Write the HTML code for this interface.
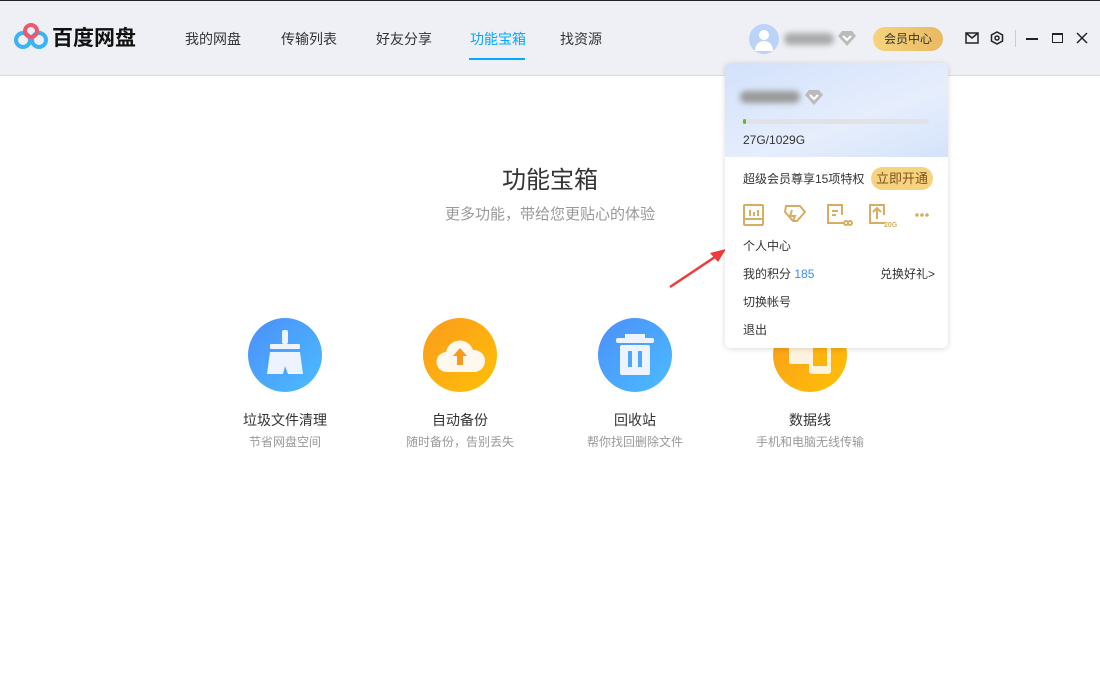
<!DOCTYPE html>
<html><head><meta charset="utf-8"><style>
*{margin:0;padding:0;box-sizing:border-box}
body{width:1100px;height:681px;position:relative;background:#fff;font-family:"Liberation Sans","Noto Sans CJK SC",sans-serif;overflow:hidden;color:#333}
.hdr{position:absolute;left:0;top:0;width:1100px;height:76px;background:#eef0f6;border-top:1px solid #222;border-bottom:1px solid #dcdde3}
.a{position:absolute;white-space:nowrap}
.nav{top:28px;font-size:14px;color:#333}
.ic{position:absolute;width:74px;height:74px;border-radius:50%}
.blue{background:linear-gradient(135deg,#4b8ff9,#4bbcff)}
.org{background:linear-gradient(135deg,#fb9a1e,#ffc105)}
.t1{font-size:14px;color:#333;text-align:center;width:160px}
.t2{font-size:12px;color:#999;text-align:center;width:160px}
.pop{position:absolute;left:725px;top:63px;width:223px;height:285px;background:#fff;border-radius:5px;box-shadow:0 1px 6px rgba(0,0,0,.15);overflow:hidden}
.ph{position:absolute;left:0;top:0;width:223px;height:94px;background:linear-gradient(160deg,#d2e1fb,#e6eefc 60%,#d4e3fb)}
.pi{font-size:12px;color:#333;line-height:12px}
</style></head><body>
<div class="hdr">
<svg class="a" style="left:14px;top:21px" width="34" height="28" viewBox="0 0 34 28"><circle cx="9" cy="18" r="7" fill="none" stroke="#3cb3f5" stroke-width="4"/><circle cx="25" cy="18" r="7" fill="none" stroke="#3cb3f5" stroke-width="4"/><circle cx="17" cy="9" r="6" fill="none" stroke="#f0576a" stroke-width="4"/></svg>
<div class="a" style="left:52px;top:21px;font-size:21px;font-weight:bold;color:#111">百度网盘</div>
<div class="a nav" style="left:185px">我的网盘</div>
<div class="a nav" style="left:281px">传输列表</div>
<div class="a nav" style="left:376px">好友分享</div>
<div class="a nav" style="left:470px;color:#06a7ff">功能宝箱</div>
<div class="a" style="left:469px;top:57px;width:56px;height:2px;background:#06a7ff"></div>
<div class="a nav" style="left:560px">找资源</div>
<div class="a" style="left:749px;top:23px;width:30px;height:30px;border-radius:50%;background:#bcd3f8"><div style="position:absolute;left:10px;top:6px;width:10px;height:10px;border-radius:50%;background:#fff"></div><div style="position:absolute;left:6px;top:17px;width:18px;height:10px;border-radius:9px 9px 0 0;background:#fff"></div></div>
<div class="a" style="left:784px;top:32px;width:50px;height:12px;background:#aaa;filter:blur(3px);border-radius:6px"></div>
<svg class="a" style="left:838px;top:29px" width="18" height="16" viewBox="0 0 18 16"><path d="M4 1h10l4 5-9 10-9-10z" fill="#bbb"/><path d="M5 6l4 4 4-4" stroke="#fff" stroke-width="2" fill="none"/></svg>
<div class="a" style="left:873px;top:26px;width:70px;height:24px;border-radius:12px;background:linear-gradient(90deg,#f6d47c,#e9b962);font-size:12px;line-height:24px;text-align:center;color:#333">会员中心</div>
<svg class="a" style="left:965px;top:31px" width="14" height="12" viewBox="0 0 14 12"><rect x="1" y="1" width="12" height="10" fill="none" stroke="#222" stroke-width="1.5"/><path d="M1 1l6 5 6-5" fill="none" stroke="#222" stroke-width="1.5"/></svg>
<svg class="a" style="left:990px;top:30px" width="14" height="14" viewBox="0 0 14 14"><path d="M7 1l5.5 3v6L7 13 1.5 10V4z" fill="none" stroke="#222" stroke-width="1.5"/><circle cx="7" cy="7" r="2" fill="none" stroke="#222" stroke-width="1.5"/></svg>
<div class="a" style="left:1015px;top:29px;width:1px;height:17px;background:#ccc"></div>
<div class="a" style="left:1026px;top:37px;width:12px;height:1.5px;background:#222"></div>
<div class="a" style="left:1052px;top:32px;width:11px;height:10px;border:1.5px solid #222;border-top-width:2.5px"></div>
<svg class="a" style="left:1076px;top:31px" width="12" height="12" viewBox="0 0 12 12"><path d="M1 1l10 10M11 1L1 11" stroke="#222" stroke-width="1.5"/></svg>
</div>
<div class="a" style="left:0;top:168px;width:1100px;text-align:center;font-size:24px;line-height:26px;color:#333">功能宝箱</div>
<div class="a" style="left:0;top:206px;width:1100px;text-align:center;font-size:15px;line-height:17px;color:#999">更多功能，带给您更贴心的体验</div>

<div class="ic blue" style="left:248px;top:318px"><svg width="74" height="74" viewBox="0 0 74 74"><rect x="34" y="12" width="6" height="14" rx="2" fill="#eef4ff"/><rect x="22" y="26" width="30" height="5" rx="1" fill="#eef4ff"/><path d="M22 34h30l3 22H40l-3-8-2 8H19z" fill="#eef4ff"/></svg></div>
<div class="ic org" style="left:423px;top:318px"><svg width="74" height="74" viewBox="0 0 74 74"><path d="M24 54a10 10 0 0 1-1-20 14 14 0 0 1 27-2 11 11 0 0 1 2 22z" fill="#fff8ef"/><path d="M37 30l-7 8h4v9h6v-9h4z" fill="#f89a1c"/></svg></div>
<div class="ic blue" style="left:598px;top:318px"><svg width="74" height="74" viewBox="0 0 74 74"><rect x="27" y="16" width="20" height="4" fill="#eef4ff"/><rect x="18" y="20" width="38" height="5" rx="2" fill="#eef4ff"/><rect x="22" y="27" width="30" height="30" rx="2" fill="#eef4ff"/><rect x="30" y="33" width="4" height="16" fill="#4ba8fc"/><rect x="40" y="33" width="4" height="16" fill="#4ba8fc"/></svg></div>
<div class="ic org" style="left:773px;top:318px"><svg width="74" height="74" viewBox="0 0 74 74"><rect x="16" y="24" width="26" height="22" rx="2" fill="#fff3dd"/><rect x="36" y="20" width="22" height="36" rx="3" fill="#fff3dd"/><rect x="40" y="24" width="14" height="24" fill="#fdb40f"/></svg></div>

<div class="a t1" style="left:205px;top:410px">垃圾文件清理</div><div class="a t2" style="left:205px;top:433px">节省网盘空间</div>
<div class="a t1" style="left:380px;top:410px">自动备份</div><div class="a t2" style="left:380px;top:433px">随时备份，告别丢失</div>
<div class="a t1" style="left:555px;top:410px">回收站</div><div class="a t2" style="left:555px;top:433px">帮你找回删除文件</div>
<div class="a t1" style="left:730px;top:410px">数据线</div><div class="a t2" style="left:730px;top:433px">手机和电脑无线传输</div>

<svg class="a" style="left:668px;top:245px" width="60" height="45" viewBox="0 0 60 45"><path d="M2 42L50 10" stroke="#f03a3a" stroke-width="2.5"/><path d="M58 4L42 8l8 9z" fill="#f03a3a"/></svg>

<div class="pop">
<div class="ph"></div>
<div class="a" style="left:15px;top:28px;width:60px;height:12px;background:#999;filter:blur(3px);border-radius:6px"></div>
<svg class="a" style="left:80px;top:26px" width="18" height="16" viewBox="0 0 18 16"><path d="M4 1h10l4 5-9 10-9-10z" fill="#bbb"/><path d="M5 6l4 4 4-4" stroke="#fff" stroke-width="2" fill="none"/></svg>
<div class="a" style="left:18px;top:56px;width:186px;height:5px;border-radius:3px;background:#e0e2e8"></div>
<div class="a" style="left:18px;top:56px;width:3px;height:5px;border-radius:2px;background:#52c41a"></div>
<div class="a pi" style="left:18px;top:71px">27G/1029G</div>
<div class="a pi" style="left:18px;top:110px">超级会员尊享15项特权</div>
<div class="a" style="left:146px;top:104px;width:62px;height:23px;border-radius:12px;background:#f7d27f;font-size:13px;line-height:23px;text-align:center;color:#7a5520">立即开通</div>
<svg class="a" style="left:18px;top:140px" width="200" height="26" viewBox="0 0 200 26"><g fill="none" stroke="#d6ad63" stroke-width="2"><rect x="1" y="2" width="19" height="20" rx="1"/><path d="M1 16h19M7 7v6M11 9v4M15 7v6"/><path d="M43 3h14l5 6-8 9h-4l-8-9z M49 7l-2 6h5l-2 5"/><path d="M101 20H85V2h14v10M89 8h6M89 12h4"/><path d="M142 20h-15V2h14v10M134 5v11M130 9l4-4 4 4"/><circle cx="103" cy="20" r="2"/><circle cx="107" cy="20" r="2"/></g><text x="141" y="24" font-size="7" fill="#d6ad63" font-weight="bold" font-family="Liberation Sans">20G</text><g fill="#d6ad63"><circle cx="174" cy="12" r="1.8"/><circle cx="179" cy="12" r="1.8"/><circle cx="184" cy="12" r="1.8"/></g></svg>
<div class="a pi" style="left:18px;top:177px">个人中心</div>
<div class="a pi" style="left:18px;top:205px">我的积分 <span style="color:#3a8bf0">185</span></div>
<div class="a pi" style="left:155px;top:205px">兑换好礼&gt;</div>
<div class="a pi" style="left:18px;top:233px">切换帐号</div>
<div class="a pi" style="left:18px;top:261px">退出</div>
</div>
</body></html>
